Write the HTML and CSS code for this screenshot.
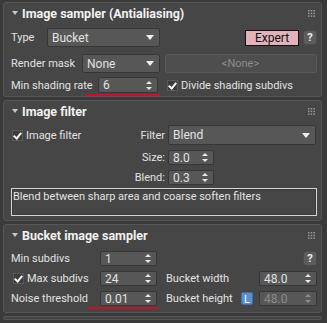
FILE: index.html
```html
<!DOCTYPE html>
<html lang="en">
<head>
  <meta charset="UTF-8">
  <title>Image sampler</title>
  <link rel="stylesheet" href="styles.css">
</head>
<body>
  <div class="rollout">
    <div class="rollout-head">
      <span class="arrow"></span>
      <span class="title">Image sampler (Antialiasing)</span>
      <svg class="grip" width="7" height="7" viewBox="0 0 7 7"><g fill="#9a9a9a"><rect x="0" y="0" width="1.5" height="1.5"/><rect x="2.7" y="0" width="1.5" height="1.5"/><rect x="5.4" y="0" width="1.5" height="1.5"/><rect x="0" y="2.7" width="1.5" height="1.5"/><rect x="2.7" y="2.7" width="1.5" height="1.5"/><rect x="5.4" y="2.7" width="1.5" height="1.5"/><rect x="0" y="5.4" width="1.5" height="1.5"/><rect x="2.7" y="5.4" width="1.5" height="1.5"/><rect x="5.4" y="5.4" width="1.5" height="1.5"/></g></svg>
    </div>
    <div class="rollout-body sampler">
      <div class="row r-type">
        <span class="label w-type">Type</span>
        <div class="combo w-bucket"><span>Bucket</span><span class="down"></span></div>
        <button class="expert">Expert</button>
        <button class="help">?</button>
      </div>
      <div class="row r-mask">
        <span class="label w-mask">Render mask</span>
        <div class="combo w-none"><span>None</span><span class="down"></span></div>
        <div class="field disabled">&lt;None&gt;</div>
      </div>
      <div class="row r-rate">
        <span class="label w-rate">Min shading rate</span>
        <div class="spinner w-rate-spin marked"><span>6</span><span class="updown"></span></div>
        <label class="check"><span class="box"></span>Divide shading subdivs</label>
      </div>
    </div>
  </div>

  <div class="rollout">
    <div class="rollout-head">
      <span class="arrow"></span>
      <span class="title">Image filter</span>
      <svg class="grip" width="7" height="7" viewBox="0 0 7 7"><g fill="#9a9a9a"><rect x="0" y="0" width="1.5" height="1.5"/><rect x="2.7" y="0" width="1.5" height="1.5"/><rect x="5.4" y="0" width="1.5" height="1.5"/><rect x="0" y="2.7" width="1.5" height="1.5"/><rect x="2.7" y="2.7" width="1.5" height="1.5"/><rect x="5.4" y="2.7" width="1.5" height="1.5"/><rect x="0" y="5.4" width="1.5" height="1.5"/><rect x="2.7" y="5.4" width="1.5" height="1.5"/><rect x="5.4" y="5.4" width="1.5" height="1.5"/></g></svg>
    </div>
    <div class="rollout-body filter">
      <div class="filter-grid">
        <label class="check filter-on"><span class="box"></span>Image filter</label>
        <span class="label right">Filter</span>
        <div class="combo"><span>Blend</span><span class="down"></span></div>
        <span class="label right">Size:</span>
        <div class="spinner w-small"><span>8.0</span><span class="updown"></span></div>
        <span class="label right">Blend:</span>
        <div class="spinner w-small"><span>0.3</span><span class="updown"></span></div>
      </div>
      <div class="desc">Blend between sharp area and coarse soften filters</div>
    </div>
  </div>

  <div class="rollout">
    <div class="rollout-head">
      <span class="arrow"></span>
      <span class="title">Bucket image sampler</span>
      <svg class="grip" width="7" height="7" viewBox="0 0 7 7"><g fill="#9a9a9a"><rect x="0" y="0" width="1.5" height="1.5"/><rect x="2.7" y="0" width="1.5" height="1.5"/><rect x="5.4" y="0" width="1.5" height="1.5"/><rect x="0" y="2.7" width="1.5" height="1.5"/><rect x="2.7" y="2.7" width="1.5" height="1.5"/><rect x="5.4" y="2.7" width="1.5" height="1.5"/><rect x="0" y="5.4" width="1.5" height="1.5"/><rect x="2.7" y="5.4" width="1.5" height="1.5"/><rect x="5.4" y="5.4" width="1.5" height="1.5"/></g></svg>
    </div>
    <div class="rollout-body bucket">
      <div class="row brow">
        <span class="label w-blabel">Min subdivs</span>
        <div class="spinner w-bspin"><span>1</span><span class="updown"></span></div>
        <button class="help push">?</button>
      </div>
      <div class="row brow">
        <label class="check w-blabel max"><span class="box"></span>Max subdivs</label>
        <div class="spinner w-bspin"><span>24</span><span class="updown"></span></div>
        <span class="label grow">Bucket width</span>
        <div class="spinner w-bucket-spin"><span>48.0</span><span class="updown"></span></div>
      </div>
      <div class="row brow">
        <span class="label w-blabel">Noise threshold</span>
        <div class="spinner w-bspin marked"><span>0.01</span><span class="updown"></span></div>
        <span class="label grow">Bucket height</span>
        <button class="lock">L</button>
        <div class="spinner w-bucket-spin disabled"><span>48.0</span><span class="updown"></span></div>
      </div>
    </div>
  </div>

  <div class="rollout stub"></div>
</body>
</html>
```

FILE: styles.css
```css
body {
  margin: 0;
  padding: 2px 5px 0 3px;
  background-color: #3a3a3a;
  color: #e2e2e2;
  font-family: Roboto, "Liberation Sans", sans-serif;
  font-size: 11px;
  overflow: hidden;
}
.rollout {
  background-color: #464646;
  border: 1px solid #565656;
  border-radius: 3px;
  margin-bottom: 3px;
}
.rollout.stub {
  height: 2px;
  margin-bottom: 0;
}
.rollout-head {
  display: flex;
  align-items: center;
  height: 20px;
  padding: 0 6px 0 8px;
}
.arrow {
  width: 0;
  height: 0;
  border-left: 3px solid transparent;
  border-right: 3px solid transparent;
  border-top: 4px solid #c8c8c8;
  margin-right: 4px;
}
.title {
  font-weight: bold;
  font-size: 12.5px;
  color: #f2f2f2;
}
.grip {
  margin-left: auto;
}
.rollout-body {
  padding: 0 4px 3px 7px;
}
.row {
  display: flex;
  align-items: center;
}
.label {
  white-space: nowrap;
}
.right {
  grid-column: 2;
  justify-self: end;
}
.grow {
  flex: 1;
}

/* controls */
.combo, .spinner, .field {
  display: flex;
  align-items: center;
  box-sizing: border-box;
  background-color: #575757;
  border: 1px solid #363636;
  border-radius: 2px;
  padding: 0 5px 0 4px;
  font-size: 12px;
}
.combo span:first-child, .spinner span:first-child {
  flex: 1;
}
.down {
  width: 0;
  height: 0;
  border-left: 4px solid transparent;
  border-right: 4px solid transparent;
  border-top: 5px solid #f0f0f0;
}
.updown {
  width: 6px;
  height: 9px;
  position: relative;
}
.updown::before, .updown::after {
  content: "";
  position: absolute;
  left: 0;
  border-left: 3px solid transparent;
  border-right: 3px solid transparent;
}
.updown::before {
  top: 0;
  border-bottom: 3px solid #e8e8e8;
}
.updown::after {
  bottom: 0;
  border-top: 3px solid #e8e8e8;
}
.disabled {
  color: #8c8c8c;
}
.disabled .updown::before {
  border-bottom-color: #8c8c8c;
}
.disabled .updown::after {
  border-top-color: #8c8c8c;
}
.field {
  flex: 1;
  justify-content: center;
  height: 19px;
  background-color: #4e4e4e;
  border-color: #5a5a5a;
  border-radius: 3px;
  margin-left: 5px;
  font-size: 11px;
}
button {
  font-family: inherit;
  font-size: 11px;
  padding: 0;
  cursor: pointer;
}
.expert {
  margin-left: auto;
  width: 54px;
  height: 16px;
  background-color: #e3b3bd;
  color: #111;
  border: 1px solid #111;
  font-size: 12px;
}
.help {
  width: 14px;
  height: 15px;
  margin-left: 4px;
  background-color: #5c5c5c;
  color: #eee;
  border: 1px solid #4a4a4a;
  border-radius: 3px;
  font-weight: bold;
}
.help.push {
  margin-left: auto;
}
.lock {
  width: 12px;
  height: 13px;
  margin-right: 6px;
  background-color: #5b8fc9;
  color: #fff;
  border: 1px solid #3d6ea8;
  border-radius: 2px;
}
.check {
  display: flex;
  align-items: center;
  white-space: nowrap;
}
.box {
  width: 9px;
  height: 9px;
  margin-right: 3px;
  background-color: #3c3c3c;
  border: 1px solid #5a5a5a;
  position: relative;
}
.box::after {
  content: "";
  position: absolute;
  left: 2px;
  top: 0;
  width: 3px;
  height: 6px;
  border-right: 2px solid #f4f4f4;
  border-bottom: 2px solid #f4f4f4;
  transform: rotate(40deg);
}
.marked {
  position: relative;
}
.marked::after {
  content: "";
  position: absolute;
  left: -13px;
  right: -3px;
  bottom: -4px;
  height: 2px;
  background-color: #c8102e;
}

/* image sampler */
.r-type {
  height: 19px;
  margin-top: 5px;
}
.w-type { width: 36px; }
.w-bucket { width: 113px; height: 19px; }
.r-mask {
  height: 19px;
  margin-top: 7px;
}
.w-mask { width: 71px; }
.w-none { width: 78px; height: 19px; }
.r-rate {
  height: 16px;
  margin-top: 4px;
}
.w-rate { width: 87px; }
.w-rate-spin { width: 60px; height: 16px; }
.r-rate .check {
  margin-left: 9px;
}

/* image filter */
.filter {
  padding-top: 4px;
  padding-bottom: 4px;
}
.filter-grid {
  display: grid;
  grid-template-columns: 119px 32px 148px;
  grid-template-rows: 20px 15px 15px;
  column-gap: 3px;
  row-gap: 5px;
  align-items: center;
}
.filter-grid .combo,
.filter-grid .spinner {
  grid-column: 3;
}
.filter-grid .combo {
  height: 20px;
}
.w-small {
  width: 46px;
  height: 15px;
}
.filter-on {
  padding-left: 1px;
}
.desc {
  margin-top: 3px;
  height: 28px;
  box-sizing: border-box;
  border: 1px solid #d6d6d6;
  box-shadow: inset 0 0 0 1px #3a3a3a;
  padding: 1px 1px;
  line-height: 14px;
  white-space: nowrap;
  overflow: hidden;
}

/* bucket image sampler */
.bucket {
  padding-top: 6px;
  padding-bottom: 6px;
}
.brow {
  height: 15px;
  margin-bottom: 5px;
}
.brow:last-child {
  margin-bottom: 0;
}
.w-blabel { width: 89px; }
.max {
  padding-left: 2px;
  box-sizing: border-box;
}
.w-bspin {
  width: 57px;
  height: 15px;
  margin-right: 9px;
}
.w-bucket-spin {
  width: 58px;
  height: 15px;
}
```
